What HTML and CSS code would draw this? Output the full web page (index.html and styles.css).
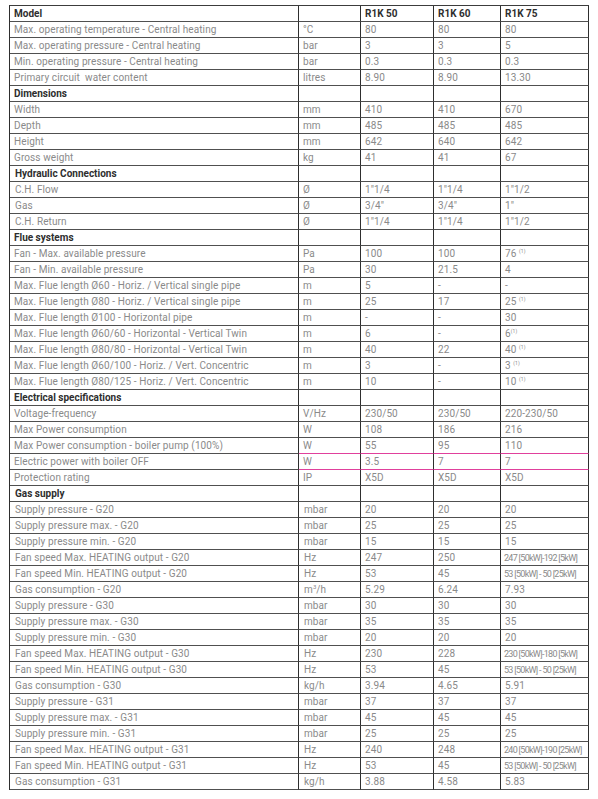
FILE: index.html
```html
<!DOCTYPE html>
<html>
<head>
<meta charset="utf-8">
<link rel="stylesheet" href="styles.css">
</head>
<body>
<table class="spec">
<colgroup>
<col class="c1"><col class="c2"><col class="c3"><col class="c4"><col class="c5">
</colgroup>
<tbody>
<tr class="sec"><td>Model</td><td></td><td>R1K 50</td><td>R1K 60</td><td>R1K 75</td></tr>
<tr><td>Max. operating temperature - Central heating</td><td>°C</td><td>80</td><td>80</td><td>80</td></tr>
<tr><td>Max. operating pressure - Central heating</td><td>bar</td><td>3</td><td>3</td><td>5</td></tr>
<tr><td>Min. operating pressure - Central heating</td><td>bar</td><td>0.3</td><td>0.3</td><td>0.3</td></tr>
<tr><td>Primary circuit&nbsp; water content</td><td>litres</td><td>8.90</td><td>8.90</td><td>13.30</td></tr>
<tr class="sec"><td>Dimensions</td><td></td><td></td><td></td><td></td></tr>
<tr><td>Width</td><td>mm</td><td>410</td><td>410</td><td>670</td></tr>
<tr><td>Depth</td><td>mm</td><td>485</td><td>485</td><td>485</td></tr>
<tr><td>Height</td><td>mm</td><td>642</td><td>640</td><td>642</td></tr>
<tr><td>Gross weight</td><td>kg</td><td>41</td><td>41</td><td>67</td></tr>
<tr class="sec"><td class="ind">Hydraulic Connections</td><td></td><td></td><td></td><td></td></tr>
<tr><td class="ind">C.H. Flow</td><td>Ø</td><td>1″1/4</td><td>1″1/4</td><td>1″1/2</td></tr>
<tr><td class="ind">Gas</td><td>Ø</td><td>3/4″</td><td>3/4″</td><td>1″</td></tr>
<tr><td class="ind">C.H. Return</td><td>Ø</td><td>1″1/4</td><td>1″1/4</td><td>1″1/2</td></tr>
<tr class="sec"><td>Flue systems</td><td></td><td></td><td></td><td></td></tr>
<tr><td>Fan - Max. available pressure</td><td>Pa</td><td>100</td><td>100</td><td>76 <sup>(1)</sup></td></tr>
<tr><td>Fan - Min. available pressure</td><td>Pa</td><td>30</td><td>21.5</td><td>4</td></tr>
<tr><td>Max. Flue length Ø60 - Horiz. / Vertical single pipe</td><td>m</td><td>5</td><td>-</td><td>-</td></tr>
<tr><td>Max. Flue length Ø80 - Horiz. / Vertical single pipe</td><td>m</td><td>25</td><td>17</td><td>25 <sup>(1)</sup></td></tr>
<tr><td>Max. Flue length Ø100 - Horizontal pipe</td><td>m</td><td>-</td><td>-</td><td>30</td></tr>
<tr><td>Max. Flue length Ø60/60 - Horizontal - Vertical Twin</td><td>m</td><td>6</td><td>-</td><td>6<sup>(1)</sup></td></tr>
<tr><td>Max. Flue length Ø80/80 - Horizontal - Vertical Twin</td><td>m</td><td>40</td><td>22</td><td>40 <sup>(1)</sup></td></tr>
<tr><td>Max. Flue length Ø60/100 - Horiz. / Vert. Concentric</td><td>m</td><td>3</td><td>-</td><td>3 <sup>(1)</sup></td></tr>
<tr><td>Max. Flue length Ø80/125 - Horiz. / Vert. Concentric</td><td>m</td><td>10</td><td>-</td><td>10 <sup>(1)</sup></td></tr>
<tr class="sec"><td>Electrical specifications</td><td></td><td></td><td></td><td></td></tr>
<tr><td>Voltage-frequency</td><td>V/Hz</td><td>230/50</td><td>230/50</td><td>220-230/50</td></tr>
<tr><td>Max Power consumption</td><td>W</td><td>108</td><td>186</td><td>216</td></tr>
<tr class="pink"><td>Max Power consumption - boiler pump (100%)</td><td>W</td><td>55</td><td>95</td><td>110</td></tr>
<tr class="pink"><td>Electric power with boiler OFF</td><td>W</td><td>3.5</td><td>7</td><td>7</td></tr>
<tr><td>Protection rating</td><td>IP</td><td>X5D</td><td>X5D</td><td>X5D</td></tr>
<tr class="sec"><td class="ind">Gas supply</td><td></td><td></td><td></td><td></td></tr>
<tr><td class="ind">Supply pressure - G20</td><td class="ind">mbar</td><td>20</td><td>20</td><td>20</td></tr>
<tr><td class="ind">Supply pressure max. - G20</td><td class="ind">mbar</td><td>25</td><td>25</td><td>25</td></tr>
<tr><td class="ind">Supply pressure min. - G20</td><td class="ind">mbar</td><td>15</td><td>15</td><td>15</td></tr>
<tr><td class="ind">Fan speed Max. HEATING output - G20</td><td class="ind">Hz</td><td>247</td><td>250</td><td class="cond">247 [50kW]-192 [5kW]</td></tr>
<tr><td class="ind">Fan speed Min. HEATING output - G20</td><td class="ind">Hz</td><td>53</td><td>45</td><td class="cond">53 [50kW] - 50 [25kW]</td></tr>
<tr><td class="ind">Gas consumption - G20</td><td class="ind">m<sup class="p">3</sup>/h</td><td>5.29</td><td>6.24</td><td>7.93</td></tr>
<tr><td class="ind">Supply pressure - G30</td><td class="ind">mbar</td><td>30</td><td>30</td><td>30</td></tr>
<tr><td class="ind">Supply pressure max. - G30</td><td class="ind">mbar</td><td>35</td><td>35</td><td>35</td></tr>
<tr><td class="ind">Supply pressure min. - G30</td><td class="ind">mbar</td><td>20</td><td>20</td><td>20</td></tr>
<tr><td class="ind">Fan speed Max. HEATING output - G30</td><td class="ind">Hz</td><td>230</td><td>228</td><td class="cond">230 [50kW]-180 [5kW]</td></tr>
<tr><td class="ind">Fan speed Min. HEATING output - G30</td><td class="ind">Hz</td><td>53</td><td>45</td><td class="cond">53 [50kW] - 50 [25kW]</td></tr>
<tr><td class="ind">Gas consumption - G30</td><td class="ind">kg/h</td><td>3.94</td><td>4.65</td><td>5.91</td></tr>
<tr><td class="ind">Supply pressure - G31</td><td class="ind">mbar</td><td>37</td><td>37</td><td>37</td></tr>
<tr><td class="ind">Supply pressure max. - G31</td><td class="ind">mbar</td><td>45</td><td>45</td><td>45</td></tr>
<tr><td class="ind">Supply pressure min. - G31</td><td class="ind">mbar</td><td>25</td><td>25</td><td>25</td></tr>
<tr><td class="ind">Fan speed Max. HEATING output - G31</td><td class="ind">Hz</td><td>240</td><td>248</td><td class="cond">240 [50kW]-190 [25kW]</td></tr>
<tr><td class="ind">Fan speed Min. HEATING output - G31</td><td class="ind">Hz</td><td>53</td><td>45</td><td class="cond">53 [50kW] - 50 [25kW]</td></tr>
<tr><td class="ind">Gas consumption - G31</td><td class="ind">kg/h</td><td>3.88</td><td>4.58</td><td>5.83</td></tr>
</tbody>
</table>
</body>
</html>
```
FILE: styles.css
```css
html, body {
  margin: 0;
  background: #ffffff;
}
body {
  padding: 5px 0 0 9px;
  font-family: Roboto, "Liberation Sans", sans-serif;
  font-size: 10px;
  letter-spacing: 0.1px;
  color: #8a8a8a;
}
.spec {
  border-collapse: separate;
  border-spacing: 0;
  table-layout: fixed;
  width: 580px;
  border-top: 1px solid #3c3c3c;
  border-left: 1px solid #2e2e2e;
}
.c1 { width: 289px; }
.c2 { width: 62px; }
.c3 { width: 73px; }
.c4 { width: 67px; }
.c5 { width: 88px; }
.spec td {
  height: 16px;
  padding: 1px 4px 0 4px;
  line-height: 14px;
  border-bottom: 1px solid #505050;
  border-right: 1px solid #2e2e2e;
  white-space: nowrap;
  overflow: hidden;
  box-sizing: border-box;
  vertical-align: middle;
}
.spec td.ind { padding-left: 5px; }
.spec .sec td {
  font-weight: bold;
  letter-spacing: 0;
  color: #2e2e2e;
}
.spec tr.pink td:not(:first-child) {
  border-bottom-color: #e0409c;
}
.spec td.cond {
  font-size: 9px;
  letter-spacing: -0.7px;
  padding-left: 3px;
}
.spec sup {
  font-size: 5px;
  vertical-align: 4px;
  line-height: 0;
}
.spec sup.p {
  font-size: 6px;
}
```
